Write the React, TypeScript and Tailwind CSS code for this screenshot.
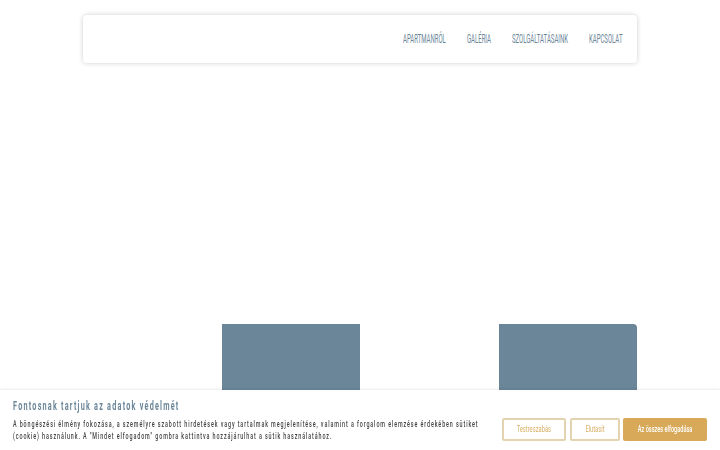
// No condensed font is installed, so the labels are squeezed with scale-x
const navLinks = [
  { label: "APARTMANRÓL", box: "w-[44px]" },
  { label: "GALÉRIA", box: "w-[25px]" },
  { label: "SZOLGÁLTATÁSAINK", box: "w-[57px]" },
  { label: "KAPCSOLAT", box: "w-[33px]" },
];

export default function App() {
  return (
    <div className="h-screen overflow-hidden bg-white font-['Roboto','Liberation_Sans',sans-serif]">
      {/* Header */}
      <div className="mx-auto w-[554px] pt-[15px]">
        <nav className="flex h-12 items-center justify-end gap-5 rounded-[4px] bg-white pr-[15px] shadow-[0_0_5px_rgba(0,0,0,0.2)]">
          {navLinks.map((link) => (
            <a key={link.label} className={`${link.box} text-[12px] leading-4 text-[#6b8699]`}>
              <span className="inline-block origin-left scale-x-[0.5] whitespace-nowrap">{link.label}</span>
            </a>
          ))}
        </nav>

        {/* Tiles */}
        <div className="mt-[261px] grid grid-cols-4">
          <div />
          <div className="h-[138px] bg-[#6b8699]" />
          <div />
          <div className="h-[138px] rounded-tr-[4px] bg-[#6b8699]" />
        </div>
      </div>

      {/* Cookie banner */}
      <div className="fixed inset-x-0 bottom-0 flex h-[60px] items-start justify-between bg-white px-[13px] shadow-[0_0_3px_rgba(0,0,0,0.15)]">
        <div className="w-[470px] pt-2">
          <h2 className="origin-left scale-x-[0.606] whitespace-nowrap text-[12px] font-bold leading-4 tracking-[2px] text-[#6b8699]">
            Fontosnak tartjuk az adatok védelmét
          </h2>
          <p className="mt-[4px] text-[9px] font-medium leading-3 tracking-[1.5px] text-[#444444]">
            <span className="block origin-left scale-x-[0.597] whitespace-nowrap">
              A böngészési élmény fokozása, a személyre szabott hirdetések vagy tartalmak megjelenítése, valamint a forgalom elemzése érdekében sütiket
            </span>
            <span className="block origin-left scale-x-[0.597] whitespace-nowrap">
              (cookie) használunk. A "Mindet elfogadom" gombra kattintva hozzájárulhat a sütik használatához.
            </span>
          </p>
        </div>
        <div className="mt-[28px] flex gap-[3.5px]">
          <button className="flex h-[23px] w-[64px] items-center justify-center rounded-[2px] border-2 border-[#e3d3b0] pt-px text-[9px] text-[#d9ae63]">
            <span className="scale-x-[0.64] whitespace-nowrap">Testreszabás</span>
          </button>
          <button className="flex h-[23px] w-[50px] items-center justify-center rounded-[2px] border-2 border-[#e3d3b0] pt-px text-[9px] text-[#d9ae63]">
            <span className="scale-x-[0.64] whitespace-nowrap">Elutasít</span>
          </button>
          <button className="flex h-[23px] w-[84px] items-center justify-center rounded-[2px] bg-[#d9a95a] pt-px text-[9px] font-medium text-white">
            <span className="scale-x-[0.62] whitespace-nowrap">Az összes elfogadása</span>
          </button>
        </div>
      </div>
    </div>
  );
}
